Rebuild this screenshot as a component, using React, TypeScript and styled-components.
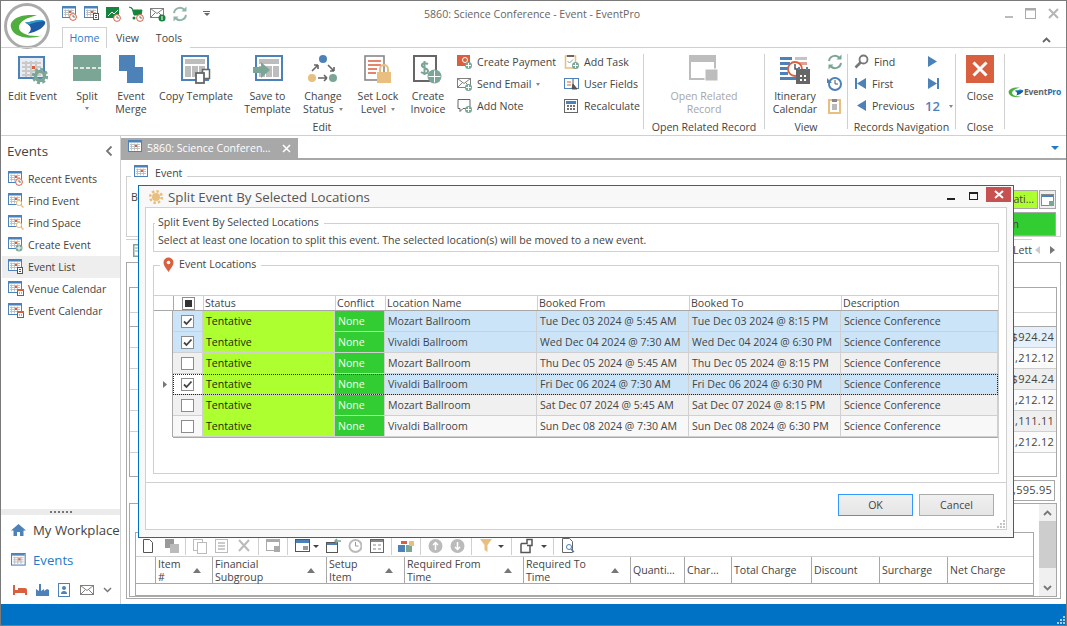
import React from 'react';
import styled, { createGlobalStyle } from 'styled-components';

const BLUE = '#4d82b8';
const TEAL = '#7ba696';
const RED = '#d9603f';
const SAND = '#e8bf7f';
const GREY = '#7f7f7f';
const LINE = '#d0d0d0';
const DARK = '#a8a8a8';

const GlobalStyle = createGlobalStyle`
  html, body { margin: 0; padding: 0; background: #fff; }
  body { font-family: "Open Sans", "Noto Sans", sans-serif; font-size: 10.6px; color: #444; }
  * { box-sizing: border-box; }
  svg { display: block; flex: none; }
`;

const Window = styled.div`
  position: relative;
  width: 1067px;
  height: 626px;
  border: 1px solid #7a7a7a;
  display: flex;
  flex-direction: column;
  overflow: hidden;
`;

/* title bar + ribbon tabs */
const Header = styled.div`
  height: 46px;
  display: flex;
  flex: none;
`;
const LogoBox = styled.div`
  width: 61px;
  padding: 1px 0 0 2px;
`;
const HeaderMain = styled.div`
  flex: 1;
  display: flex;
  flex-direction: column;
`;
const TitleRow = styled.div`
  height: 26px;
  display: flex;
  align-items: center;
  padding-bottom: 1px;
`;
const Qat = styled.div`
  display: flex;
  gap: 6px;
  width: 362px;
  align-items: center;
`;
const QatArrow = styled.span`
  margin-left: 9px;
  width: 7px;
  border-top: 1px solid #666;
  padding-top: 1px;
  &::after {
    content: '';
    display: block;
    border: 3px solid transparent;
    border-top: 3px solid #666;
    border-bottom: 0;
    margin-left: 0.5px;
  }
`;
const WinTitle = styled.div`
  color: #666;
  white-space: nowrap;
`;
const WinButtons = styled.div`
  margin-left: auto;
  display: flex;
  gap: 11px;
  padding-right: 7px;
  align-items: center;
`;
const TabRow = styled.div`
  display: flex;
  align-items: flex-end;
  height: 20px;
  padding-right: 15px;
`;
const RibbonTab = styled.div<{ $active?: boolean; $w: number }>`
  width: ${p => p.$w}px;
  height: 21px;
  margin-bottom: -1px;
  padding-bottom: 1px;
  display: flex;
  align-items: center;
  justify-content: center;
  position: relative;
  background: #fff;
  color: ${p => (p.$active ? '#2b7cc8' : '#444')};
  border: 1px solid ${p => (p.$active ? LINE : 'transparent')};
  border-bottom: 0;
`;
const Collapse = styled.div`
  margin-left: auto;
  margin-bottom: 4px;
`;

/* ribbon */
const Ribbon = styled.div`
  height: 89px;
  flex: none;
  display: flex;
  border-top: 1px solid ${LINE};
  border-bottom: 1px solid ${LINE};
`;
const Group = styled.div<{ $w: number }>`
  width: ${p => p.$w}px;
  flex: none;
  position: relative;
  display: flex;
  flex-direction: column;
  &::after {
    content: '';
    position: absolute;
    right: 0;
    top: 6px;
    bottom: 6px;
    width: 1px;
    background: ${LINE};
  }
`;
const GroupBody = styled.div<{ $pl?: number }>`
  height: 72px;
  display: flex;
  padding-top: 7px;
  padding-left: ${p => p.$pl ?? 0}px;
`;
const GroupLabel = styled.div`
  text-align: center;
  line-height: 14px;
  padding-right: 1px;
  white-space: nowrap;
`;
const LargeButton = styled.div<{ $w: number; $off?: boolean }>`
  width: ${p => p.$w}px;
  flex: none;
  display: flex;
  flex-direction: column;
  align-items: center;
  text-align: center;
  line-height: 13px;
  color: ${p => (p.$off ? '#a6a6a6' : '#444')};
  white-space: nowrap;
`;
const LargeIcon = styled.div`
  height: 35px;
`;
const SmallColumn = styled.div<{ $w?: number; $ml?: number }>`
  width: ${p => (p.$w ? `${p.$w}px` : 'auto')};
  margin-left: ${p => p.$ml ?? 0}px;
  margin-top: -4px;
  display: flex;
  flex-direction: column;
`;
const SmallButton = styled.div`
  height: 22px;
  display: flex;
  align-items: center;
  gap: 4px;
  white-space: nowrap;
`;
const Drop = styled.span`
  display: inline-block;
  margin-left: 5px;
  vertical-align: 2px;
  border: 2.5px solid transparent;
  border-top: 3px solid #888;
  border-bottom: 0;
`;
const DropLine = styled.div`
  height: 11px;
  display: flex;
  justify-content: center;
  align-items: center;
  & > span { margin: 0; }
`;
const PageNumber = styled.span`
  color: ${BLUE};
  font-size: 13px;
  font-weight: 600;
`;
const BrandBox = styled.div`
  display: flex;
  align-items: center;
  gap: 0;
  padding: 0 0 0 2px;
  font-size: 8.6px;
  font-weight: 700;
  color: #666;
  letter-spacing: -0.2px;
`;
const BrandPro = styled.span`
  color: #1f6fb5;
`;

/* body */
const Body = styled.div`
  flex: 1;
  display: flex;
  min-height: 0;
`;
const Sidebar = styled.div`
  width: 120px;
  flex: none;
  border-right: 1px solid ${LINE};
  display: flex;
  flex-direction: column;
  overflow: hidden;
`;
const SideHead = styled.div`
  height: 31px;
  padding: 0 7px 2px 6px;
  margin-bottom: 1px;
  display: flex;
  align-items: center;
  justify-content: space-between;
  font-size: 13.4px;
`;
const SideItem = styled.div<{ $on?: boolean }>`
  height: 22px;
  display: flex;
  align-items: center;
  gap: 4px;
  padding: 0 0 1px 6px;
  margin-left: 1px;
  background: ${p => (p.$on ? '#eeeeee' : 'transparent')};
  white-space: nowrap;
`;
const Splitter = styled.div`
  margin-top: auto;
  height: 6px;
  background: #ebebeb;
  display: flex;
  justify-content: center;
  align-items: center;
  gap: 2px;
  & > i { width: 2px; height: 2px; background: #777; }
`;
const NavLink = styled.div<{ $on?: boolean }>`
  height: 30px;
  display: flex;
  align-items: center;
  gap: 7px;
  padding: 0 0 1px 10px;
  font-size: 13.2px;
  white-space: nowrap;
  color: ${p => (p.$on ? '#1f7ac8' : '#444')};
`;
const NavIcons = styled.div`
  height: 29px;
  display: flex;
  align-items: center;
  gap: 9px;
  padding-left: 12px;
`;

const Main = styled.div`
  flex: 1;
  min-width: 0;
  display: flex;
  flex-direction: column;
`;
const DocStrip = styled.div`
  height: 24px;
  flex: none;
  border-bottom: 2px solid ${DARK};
  display: flex;
  align-items: flex-end;
  justify-content: space-between;
  padding-right: 7px;
`;
const DocTab = styled.div`
  width: 177px;
  height: 22px;
  background: ${DARK};
  margin-bottom: -2px;
  color: #fff;
  display: flex;
  align-items: center;
  gap: 3px;
  padding: 0 7px 2px 7px;
  white-space: nowrap;
`;
const DocTabName = styled.span`
  flex: 1;
`;
const StripArrow = styled.div`
  border: 4px solid transparent;
  border-top: 4px solid #1f7ac8;
  border-bottom: 0;
  margin-bottom: 8px;
`;
const Content = styled.div`
  flex: 1;
  min-height: 0;
  display: flex;
  flex-direction: column;
  padding: 16px 5px 5px 5px;
`;
const EventGroup = styled.div`
  position: relative;
  height: 61px;
  flex: none;
  border: 1px solid ${LINE};
  padding: 13px 4px 0 4px;
  display: flex;
  justify-content: space-between;
`;
const Legend = styled.div<{ $x: number; $y: number }>`
  position: absolute;
  left: ${p => p.$x}px;
  top: ${p => p.$y}px;
  height: 14px;
  padding: 0 5px 0 3px;
  background: #fff;
  display: flex;
  align-items: center;
  gap: 5px;
  white-space: nowrap;
`;
const FieldStack = styled.div`
  width: 320px;
  display: flex;
  flex-direction: column;
  gap: 3px;
`;
const FieldRow = styled.div`
  display: flex;
  gap: 1px;
`;
const Field = styled.div<{ $bg: string; $h: number; $pr: number }>`
  flex: 1;
  height: ${p => p.$h}px;
  background: ${p => p.$bg};
  border: 1px solid ${DARK};
  padding: 0 ${p => p.$pr}px 1px 0;
  display: flex;
  align-items: center;
  justify-content: flex-end;
  overflow: hidden;
  white-space: nowrap;
`;
const FieldButton = styled.div`
  width: 17px;
  height: 19px;
  background: #eee;
  border: 1px solid ${DARK};
  display: flex;
  align-items: center;
  justify-content: center;
`;
const TabsPanel = styled.div`
  flex: 1;
  min-height: 0;
  margin-top: 2px;
  display: flex;
  flex-direction: column;
`;
const TabsHead = styled.div`
  height: 23px;
  flex: none;
  display: flex;
`;
const TabsStrip = styled.div`
  flex: 1;
  border-top: 1px solid ${LINE};
  display: flex;
  align-items: center;
  justify-content: space-between;
  padding: 0 0 2px 7px;
`;
const TabsArrows = styled.div`
  width: 29px;
  padding: 0 6px 0 3px;
  display: flex;
  align-items: center;
  justify-content: space-between;
  padding-bottom: 2px;
`;
const TabsBody = styled.div`
  flex: 1;
  min-height: 0;
  border: 1px solid ${DARK};
  padding: 0 3px 1px 2px;
  display: flex;
  flex-direction: column;
`;
const TopSection = styled.div`
  height: 240px;
  flex: none;
  padding-top: 24px;
  display: flex;
  flex-direction: column;
  align-items: flex-end;
`;
const ChargeTable = styled.div`
  width: 100%;
  height: 190px;
  border: 1px solid ${DARK};
  display: flex;
  flex-direction: column;
`;
const ChargeRow = styled.div<{ $h: number; $strong?: boolean }>`
  height: ${p => p.$h}px;
  flex: none;
  border-bottom: 1px solid ${p => (p.$strong ? DARK : LINE)};
  display: flex;
  justify-content: flex-end;
`;
const ChargeCell = styled.div<{ $bg: string }>`
  width: 140px;
  background: ${p => p.$bg};
  display: flex;
  align-items: center;
  justify-content: flex-end;
  padding: 0 2px 1px 0;
  font-size: 11px;
  letter-spacing: 0.25px;
  white-space: nowrap;
`;
const TotalBox = styled.div`
  margin: 3px 2px 0 0;
  width: 200px;
  height: 21px;
  border: 1px solid ${DARK};
  text-align: right;
  padding-right: 2px;
  line-height: 18px;
  font-size: 11px;
  letter-spacing: 0.25px;
`;
const BottomSection = styled.div`
  flex: 1;
  min-height: 0;
  border: 1px solid ${DARK};
  display: flex;
  gap: 5px;
  padding-left: 5px;
`;
const SubPanel = styled.div`
  flex: 1;
  margin-top: 28px;
  border: 1px solid ${DARK};
  display: flex;
  flex-direction: column;
  min-width: 0;
`;
const Toolbar = styled.div`
  height: 23px;
  flex: none;
  display: flex;
  align-items: center;
  padding: 3px 0 0 7px;
`;
const ToolSlot = styled.span<{ $ml: number }>`
  margin-left: ${p => p.$ml}px;
`;
const ToolSep = styled.span<{ $ml: number }>`
  margin-left: ${p => p.$ml}px;
  width: 1px;
  height: 18px;
  background: ${LINE};
`;
const ToolDrop = styled.span<{ $ml: number }>`
  margin-left: ${p => p.$ml}px;
  border: 3px solid transparent;
  border-top: 3px solid #444;
  border-bottom: 0;
`;
const SubHead = styled.div`
  height: 28px;
  display: flex;
  border-top: 1px solid ${LINE};
  border-bottom: 1px solid ${DARK};
  line-height: 13px;
`;
const SubCell = styled.div<{ $w: number }>`
  width: ${p => p.$w}px;
  flex: none;
  border-right: 1px solid ${DARK};
  padding: 1px 2px 0 2px;
  display: flex;
  align-items: center;
  justify-content: space-between;
  white-space: pre-line;
  &:last-child { border-right: 0; flex: 1; }
`;
const SortMark = styled.span`
  flex: none;
  margin-right: 9px;
  border: 4.5px solid transparent;
  border-bottom: 5px solid #777;
  border-top: 0;
`;
const ScrollBar = styled.div`
  width: 17px;
  flex: none;
  background: #f0f0f0;
  display: flex;
  flex-direction: column;
  align-items: center;
`;
const ScrollArrow = styled.div`
  height: 17px;
  display: flex;
  align-items: center;
  justify-content: center;
`;
const ScrollThumb = styled.div`
  width: 100%;
  height: 47px;
  background: #cdcdcd;
  margin-bottom: auto;
`;

const StatusBar = styled.div`
  height: 21px;
  flex: none;
  background: #0072c6;
  position: relative;
`;
const Grip = styled.div<{ $c: string }>`
  position: absolute;
  right: 1px;
  bottom: 1px;
  width: 8px;
  height: 8px;
  background:
    linear-gradient(${p => p.$c}, ${p => p.$c}) 6px 0 / 2px 2px no-repeat,
    linear-gradient(${p => p.$c}, ${p => p.$c}) 3px 3px / 2px 2px no-repeat,
    linear-gradient(${p => p.$c}, ${p => p.$c}) 6px 3px / 2px 2px no-repeat,
    linear-gradient(${p => p.$c}, ${p => p.$c}) 0 6px / 2px 2px no-repeat,
    linear-gradient(${p => p.$c}, ${p => p.$c}) 3px 6px / 2px 2px no-repeat,
    linear-gradient(${p => p.$c}, ${p => p.$c}) 6px 6px / 2px 2px no-repeat;
`;

/* split dialog */
const Dialog = styled.div`
  position: absolute;
  left: 137px;
  top: 184px;
  width: 876px;
  height: 353px;
  border: 1px solid #0072c6;
  background: #f8f8f8;
  display: flex;
  flex-direction: column;
  padding: 0 6px 7px 6px;
`;
const DialogTitle = styled.div`
  height: 21px;
  flex: none;
  display: flex;
  align-items: center;
  gap: 4px;
  margin-left: 3px;
  font-size: 13.3px;
  color: #555;
  white-space: nowrap;
`;
const DialogButtons = styled.div`
  margin-left: auto;
  margin-right: -4px;
  display: flex;
  align-items: center;
  gap: 13px;
`;
const CloseBox = styled.div`
  width: 25px;
  height: 15px;
  flex: none;
  margin-left: -6px;
  margin-top: -4px;
  background: #c75050;
  display: flex;
  align-items: center;
  justify-content: center;
`;
const DialogBody = styled.div`
  flex: 1;
  position: relative;
  background: #fff;
  border: 1px solid ${LINE};
  padding: 15px 7px 0 7px;
  display: flex;
  flex-direction: column;
`;
const InfoGroup = styled.div`
  position: relative;
  height: 29px;
  flex: none;
  border: 1px solid ${LINE};
  padding: 8px 0 0 4px;
  line-height: 16px;
  white-space: nowrap;
`;
const LocationsGroup = styled.div`
  position: relative;
  height: 209px;
  flex: none;
  margin-top: 13px;
  border: 1px solid ${LINE};
  padding-top: 29px;
`;
const columns = '19px 30px 132px 50px 152px 152px 152px 1fr';
const GridHead = styled.div`
  display: grid;
  grid-template-columns: ${columns};
  height: 16px;
  border-top: 1px solid ${LINE};
  border-bottom: 1px solid ${DARK};
`;
const HeadCell = styled.div`
  border-left: 1px solid ${LINE};
  padding-left: 1px;
  line-height: 14px;
  white-space: nowrap;
  display: flex;
  align-items: center;
  &:nth-child(-n + 2) { border-left-color: ${DARK}; }
  &:first-child { border-left: 0; }
`;
const HeadCheck = styled(HeadCell)`
  justify-content: center;
  padding-left: 0;
`;
const Row = styled.div<{ $focus?: boolean }>`
  display: grid;
  grid-template-columns: ${columns};
  height: 21px;
  position: relative;
  &::after {
    content: '';
    display: ${p => (p.$focus ? 'block' : 'none')};
    position: absolute;
    inset: 0 0 0 19px;
    border: 1px dotted #222;
    pointer-events: none;
  }
`;
const Indicator = styled.div`
  display: flex;
  align-items: center;
  justify-content: flex-end;
  padding-right: 5px;
  border-right: 1px solid ${DARK};
`;
const Cell = styled.div<{ $bg: string; $fg?: string }>`
  background: ${p => p.$bg};
  color: ${p => p.$fg ?? '#444'};
  border-right: 1px solid ${LINE};
  border-bottom: 1px solid ${LINE};
  padding: 0 0 1px 3px;
  display: flex;
  align-items: center;
  white-space: nowrap;
  overflow: hidden;
`;
const CheckCell = styled(Cell)`
  justify-content: center;
  padding: 0;
`;
const CheckBox = styled.div`
  width: 13px;
  height: 13px;
  background: #fff;
  border: 1px solid #8c8c8c;
  display: flex;
  align-items: center;
  justify-content: center;
`;
const GridEnd = styled.div`
  margin-left: 19px;
  border-top: 1px solid ${DARK};
`;
const DialogFooter = styled.div`
  margin: 8px -7px 0 -7px;
  border-top: 1px solid ${LINE};
  padding: 11px 12px 0 0;
  display: flex;
  justify-content: flex-end;
  gap: 6px;
`;
const DialogButton = styled.div<{ $primary?: boolean }>`
  width: 75px;
  height: 22px;
  padding-bottom: 1px;
  background: linear-gradient(#f0f0f0, #e5e5e5);
  border: 1px solid ${p => (p.$primary ? '#3399ff' : '#acacac')};
  display: flex;
  align-items: center;
  justify-content: center;
`;

/* drawings */
const Ico = ({ w = 16, h = 16, children }: { w?: number; h?: number; children: React.ReactNode }) => (
  <svg width={w} height={h} viewBox={`0 0 ${w} ${h}`}>{children}</svg>
);
const CalBase = ({ c = BLUE }: { c?: string }) => (
  <g>
    <rect x=".5" y=".5" width="13" height="11" fill="#fff" stroke={c} />
    <rect x="1" y="1" width="12" height="1.5" fill={c} />
    <path d="M2 4.500h10M2 6.500h10M2 8.500h10M3.500 3.500v7M6.500 3.500v7M9.500 3.500v7" stroke="#bbb" strokeWidth=".9" />
    <rect x="7" y="5" width="2" height="2" fill={RED} />
  </g>
);
const Clock = ({ x, y, c = RED }: { x: number; y: number; c?: string }) => (
  <g>
    <circle cx={x} cy={y} r="3.400" fill="#fff" stroke={c} />
    <path d={`M${x} ${y - 2}v2h2`} stroke="#555" fill="none" strokeWidth=".8" />
  </g>
);
const Plus = ({ x, y, r = 3.5 }: { x: number; y: number; r?: number }) => (
  <g>
    <circle cx={x} cy={y} r={r} fill={TEAL} />
    <path d={`M${x - r + 1} ${y}h${2 * r - 2}M${x} ${y - r + 1}v${2 * r - 2}`} stroke="#fff" />
  </g>
);
const Lens = ({ x, y }: { x: number; y: number }) => (
  <g fill="none" stroke={SAND}>
    <circle cx={x} cy={y} r="2.600" fill="#fff" />
    <path d={`M${x + 2} ${y + 2}l2.500 2.500`} strokeWidth="1.500" />
  </g>
);
const MiniDoc = ({ x, y }: { x: number; y: number }) => (
  <g>
    <rect x={x + 0.5} y={y + 0.5} width="5" height="6" fill="#fff" stroke="#555" />
    <path d={`M${x + 2} ${y + 2.5}h2M${x + 2} ${y + 4.5}h2`} stroke="#555" />
  </g>
);
const MiniCal = ({ x, y }: { x: number; y: number }) => (
  <g>
    <rect x={x + 0.5} y={y + 0.5} width="6" height="6" fill="#fff" stroke="#666" />
    <rect x={x} y={y} width="7" height="2" fill={RED} />
    <path d={`M${x + 2} ${y + 4}h1M${x + 4} ${y + 4}h1`} stroke="#666" />
  </g>
);
const Envelope = ({ c = GREY }: { c?: string }) => (
  <g fill="#fff" stroke={c}>
    <rect x=".5" y="2.500" width="13" height="9" />
    <path d="M.5 2.500l6.500 5 6.500-5M.5 11.500l5-5M13.500 11.500l-5-5" fill="none" />
  </g>
);
const Refresh = ({ c = TEAL }: { c?: string }) => (
  <g fill="none" stroke={c} strokeWidth="2">
    <path d="M2 7a6 6 0 0 1 10.500-3" />
    <path d="M14 9a6 6 0 0 1-10.500 3" />
    <path d="M14.500 .5v5h-5z" fill={c} stroke="none" />
    <path d="M1.500 15.500v-5h5z" fill={c} stroke="none" />
  </g>
);
const Swoosh = () => (
  <g>
    <path d="M36 13C22 11 8 16 10 25c2 9 16 13 31 8-12 2-23-2-23-8 0-6 8-10 18-12z" fill="#4fae3d" />
    <path d="M24 20c6 0 14-5 20-1 2 4-8 11-17 12 5-4 3-8-3-11z" fill="#1f5aa6" />
    <path d="M24 20c6 0 14-5 20-1-6-1-12 2-16 3z" fill="#29a0c8" />
  </g>
);
const Logo = () => (
  <svg width="48" height="48" viewBox="0 0 48 48">
    <circle cx="24" cy="24" r="21.500" fill="#fff" stroke="#ababab" strokeWidth="3" />
    <g transform="translate(-2 .5)"><Swoosh /></g>
  </svg>
);

const QatIcons = [
  <Ico key="a"><CalBase /><Clock x={11} y={11} /></Ico>,
  <Ico key="b"><CalBase /><MiniDoc x={9} y={7} /></Ico>,
  <Ico key="c">
    <rect x="0" y="1" width="13" height="11" fill="#16843c" />
    <path d="M2 10l4-4 2 2 4-4" stroke="#fff" fill="none" />
    <Clock x={11} y={12} />
  </Ico>,
  <Ico key="d">
    <path d="M1 1l3 1 2 7h7l1-5H5" fill="#16843c" stroke="#16843c" />
    <circle cx="6" cy="12" r="1.500" fill="#16843c" />
    <Clock x={12} y={12} />
  </Ico>,
  <Ico key="e"><Envelope /><circle cx="12" cy="12" r="3.500" fill="#16843c" /><rect x="11.500" y="10" width="1" height="4" fill="#fff" /></Ico>,
  <Ico key="f"><Refresh c="#8fb5a7" /></Ico>,
];

const EditEventIcon = () => (
  <Ico w={30} h={30}>
    <rect x="1" y="2" width="25" height="21" fill="#e8edf3" stroke={BLUE} strokeWidth="2" />
    <path d="M4 8h19M4 12h19M4 16h19M4 20h19M8 6v16M13 6v16M18 6v16" stroke="#c9c9c9" strokeWidth="2" />
    <rect x="14" y="11" width="3" height="3" fill={RED} />
    <circle cx="22" cy="21" r="4.500" fill="none" stroke={TEAL} strokeWidth="3.500" />
    <circle cx="22" cy="21" r="7" fill="none" stroke={TEAL} strokeWidth="2.500" strokeDasharray="3 2.500" />
  </Ico>
);
const SplitIcon = () => (
  <Ico w={28} h={28}>
    <rect x="0" y="0" width="28" height="26" fill={TEAL} />
    <path d="M1 13h27" stroke="#fff" strokeWidth="1.500" strokeDasharray="4 2" />
  </Ico>
);
const MergeIcon = () => (
  <Ico w={25} h={29}>
    <rect x="0" y="0" width="16" height="16" fill={BLUE} />
    <rect x="8" y="12" width="16" height="16" fill={BLUE} />
  </Ico>
);
const TemplateFrame = ({ children }: { children?: React.ReactNode }) => (
  <g>
    <rect x="1" y="1" width="26" height="24" fill="#fff" stroke={BLUE} strokeWidth="2" />
    <rect x="4" y="4" width="20" height="5" fill="#bdbdbd" />
    <rect x="4" y="11" width="6" height="11" fill="#bdbdbd" />
    <rect x="11" y="11" width="6" height="11" fill="#bdbdbd" />
    <rect x="18" y="11" width="6" height="11" fill="#bdbdbd" />
    {children}
  </g>
);
const CopyTemplateIcon = () => (
  <Ico w={30} h={30}>
    <TemplateFrame>
      <rect x="21.500" y="14.500" width="7" height="9" fill="#fff" stroke="#666" strokeWidth="1.500" />
      <rect x="15" y="18" width="8" height="10" fill="#fff" stroke="#666" strokeWidth="1.800" />
    </TemplateFrame>
  </Ico>
);
const SaveTemplateIcon = () => (
  <Ico w={30} h={30}>
    <g transform="translate(2 0)"><TemplateFrame /></g>
    <path d="M0 13h8V8l9 8-9 8v-5H0z" fill={TEAL} transform="translate(0 -1)" />
  </Ico>
);
const ChangeStatusIcon = () => (
  <Ico w={30} h={30}>
    <circle cx="15" cy="4" r="4" fill={BLUE} />
    <circle cx="4" cy="23" r="4" fill={SAND} />
    <circle cx="25" cy="23" r="4" fill={TEAL} />
    <path d="M4 16l6-6M10 10H6M10 10v4M20 10l6 6M26 16h-4M26 16v-4M10 23h9M19 23l-3-3M19 23l-3 3" stroke="#666" strokeWidth="1.600" fill="none" />
  </Ico>
);
const LockIcon = () => (
  <Ico w={28} h={30}>
    <rect x="1" y="1" width="19" height="24" fill="#fff" stroke="#888" strokeWidth="1.600" />
    <path d="M4 6h13M4 10h13M4 14h9M4 18h8" stroke={RED} strokeWidth="1.500" />
    <rect x="13" y="17" width="14" height="11" fill={SAND} />
    <path d="M16 17v-3a4 4 0 0 1 8 0v3" fill="none" stroke={SAND} strokeWidth="2" />
  </Ico>
);
const InvoiceIcon = () => (
  <Ico w={30} h={30}>
    <rect x="1" y="1" width="22" height="25" fill="#fff" stroke="#666" strokeWidth="2" />
    <path d="M15 9c-4-2-7 0-6 2s6 2 6 5-4 3-7 1M11.500 6v14" stroke={TEAL} strokeWidth="2" fill="none" />
    <Plus x={21.500} y={21.500} r={7} />
  </Ico>
);
const OpenRelatedIcon = () => (
  <Ico w={30} h={30}>
    <rect x="1" y="1" width="25" height="23" fill="#fff" stroke="#bdbdbd" strokeWidth="2" />
    <rect x="1" y="1" width="25" height="6" fill="#bdbdbd" />
    <rect x="16" y="14" width="13" height="12" fill="#bdbdbd" stroke="#fff" />
  </Ico>
);
const ItineraryIcon = () => (
  <Ico w={32} h={30}>
    <path d="M1 2h12v3H1zM1 7h10v3H1zM1 12h8v3H1zM1 17h8v3H1zM1 22h18v3H1z" fill={BLUE} />
    <path d="M16 2h12v3H16z" fill="#c4c4c4" />
    <path d="M20 7h8v3h-8z" fill="#e0a090" />
    <circle cx="16" cy="14" r="7" fill="#fff" stroke={RED} strokeWidth="1.800" />
    <path d="M16 9v5h4" stroke="#555" fill="none" strokeWidth="1.500" />
    <rect x="17" y="14" width="14" height="15" fill="#666" />
    <rect x="19" y="12" width="2" height="3" fill={BLUE} />
    <rect x="27" y="12" width="2" height="3" fill={BLUE} />
    <path d="M21 20h2v2h-2zM25 20h2v2h-2zM21 24h2v2h-2zM25 24h2v2h-2z" fill="#fff" />
  </Ico>
);
const CloseIcon = () => (
  <Ico w={28} h={28}>
    <rect width="28" height="28" fill={RED} />
    <path d="M7.500 7.500l13 13M20.500 7.500l-13 13" stroke="#fff" strokeWidth="3" />
  </Ico>
);
const Tri = ({ dir, bar, c = BLUE }: { dir: 'l' | 'r'; bar?: boolean; c?: string }) => (
  <Ico w={14} h={14}>
    {dir === 'l' ? <path d="M12 1v11L3 6.500z" fill={c} /> : <path d="M3 1v11l9-5.500z" fill={c} />}
    {bar && <rect x={dir === 'l' ? 1 : 12} y="1" width="2" height="11" fill={c} />}
  </Ico>
);
const Chevron = ({ up, c = '#777' }: { up?: boolean; c?: string }) => (
  <Ico w={9} h={6}>
    <path d={up ? 'M1 5l3.500-3.500L8 5' : 'M1 1l3.500 3.500L8 1'} fill="none" stroke={c} strokeWidth="1.800" />
  </Ico>
);

const sideIcons: Record<string, React.ReactNode> = {
  recent: <Clock x={11} y={11} />,
  find: <Lens x={11} y={10} />,
  create: <Plus x={11} y={11} />,
  list: <MiniDoc x={9} y={8} />,
  cal: <MiniCal x={9} y={8} />,
};
const sideItems = [
  ['Recent Events', 'recent'],
  ['Find Event', 'find'],
  ['Find Space', 'find'],
  ['Create Event', 'create'],
  ['Event List', 'list'],
  ['Venue Calendar', 'cal'],
  ['Event Calendar', 'cal'],
];

const locations = [
  { on: true, name: 'Mozart Ballroom', from: 'Tue Dec 03 2024 @ 5:45 AM', to: 'Tue Dec 03 2024 @ 8:15 PM' },
  { on: true, name: 'Vivaldi Ballroom', from: 'Wed Dec 04 2024 @ 7:30 AM', to: 'Wed Dec 04 2024 @ 6:30 PM' },
  { on: false, name: 'Mozart Ballroom', from: 'Thu Dec 05 2024 @ 5:45 AM', to: 'Thu Dec 05 2024 @ 8:15 PM' },
  { on: true, focus: true, name: 'Vivaldi Ballroom', from: 'Fri Dec 06 2024 @ 7:30 AM', to: 'Fri Dec 06 2024 @ 6:30 PM' },
  { on: false, name: 'Mozart Ballroom', from: 'Sat Dec 07 2024 @ 5:45 AM', to: 'Sat Dec 07 2024 @ 8:15 PM' },
  { on: false, plain: true, name: 'Vivaldi Ballroom', from: 'Sun Dec 08 2024 @ 7:30 AM', to: 'Sun Dec 08 2024 @ 6:30 PM' },
];

const subColumns: [string, number, boolean][] = [
  ['', 20, false],
  ['Item\n#', 57, true],
  ['Financial\nSubgroup', 114, true],
  ['Setup\nItem', 78, true],
  ['Required From\nTime', 119, true],
  ['Required To\nTime', 107, true],
  ['Quanti…', 54, false],
  ['Char…', 47, false],
  ['Total Charge', 80, false],
  ['Discount', 68, false],
  ['Surcharge', 68, false],
  ['Net Charge', 86, false],
];

const charges: [string, string][] = [
  ['$924.24', '#e6f0fa'],
  ['$1,212.12', '#fbfbfb'],
  ['$924.24', '#efefef'],
  ['$1,212.12', '#fbfbfb'],
  ['$1,111.11', '#efefef'],
  ['$1,212.12', '#fbfbfb'],
];

const Tool = ({ children, w = 16, ml }: { children: React.ReactNode; w?: number; ml: number }) => (
  <ToolSlot $ml={ml}><Ico w={w} h={16}>{children}</Ico></ToolSlot>
);

export default function App() {
  return (
    <>
      <GlobalStyle />
      <Window>
        <Header>
          <LogoBox><Logo /></LogoBox>
          <HeaderMain>
            <TitleRow>
              <Qat>
                {QatIcons}
                <QatArrow />
              </Qat>
              <WinTitle>5860: Science Conference - Event - EventPro</WinTitle>
              <WinButtons>
                <Ico w={9} h={12}><rect x="0" y="8" width="8" height="2" fill="#bbb" /></Ico>
                <Ico w={12} h={12}><rect x=".5" y=".5" width="10" height="10" fill="none" stroke="#aaa" /><rect x="0" y="0" width="11" height="2.500" fill="#aaa" /></Ico>
                <Ico w={11} h={11}><path d="M1 1l9 9M10 1l-9 9" stroke="#b5b5b5" strokeWidth="2" /></Ico>
              </WinButtons>
            </TitleRow>
            <TabRow>
              <RibbonTab $active $w={45}>Home</RibbonTab>
              <RibbonTab $w={41}>View</RibbonTab>
              <RibbonTab $w={42}>Tools</RibbonTab>
              <Collapse><Chevron up c="#666" /></Collapse>
            </TabRow>
          </HeaderMain>
        </Header>

        <Ribbon>
          <Group $w={643}>
            <GroupBody $pl={2}>
              <LargeButton $w={59}><LargeIcon><EditEventIcon /></LargeIcon>Edit Event</LargeButton>
              <LargeButton $w={50}><LargeIcon><SplitIcon /></LargeIcon>Split<DropLine><Drop /></DropLine></LargeButton>
              <LargeButton $w={38}><LargeIcon><MergeIcon /></LargeIcon>Event<br />Merge</LargeButton>
              <LargeButton $w={92}><LargeIcon><CopyTemplateIcon /></LargeIcon>Copy Template</LargeButton>
              <LargeButton $w={51}><LargeIcon><SaveTemplateIcon /></LargeIcon>Save to<br />Template</LargeButton>
              <LargeButton $w={60}><LargeIcon><ChangeStatusIcon /></LargeIcon>Change<br /><span>Status<Drop /></span></LargeButton>
              <LargeButton $w={50}><LargeIcon><LockIcon /></LargeIcon>Set Lock<br /><span>Level<Drop /></span></LargeButton>
              <LargeButton $w={50}><LargeIcon><InvoiceIcon /></LargeIcon>Create<br />Invoice</LargeButton>
              <SmallColumn $w={107} $ml={4}>
                <SmallButton>
                  <Ico><rect x="0" y="1" width="13" height="11" fill={RED} /><circle cx="8" cy="6" r="2.500" fill="none" stroke="#fff" /><Plus x={11.500} y={11.500} /></Ico>
                  Create Payment
                </SmallButton>
                <SmallButton>
                  <Ico><Envelope /><Plus x={11.500} y={11.500} /></Ico>
                  <span>Send Email<Drop /></span>
                </SmallButton>
                <SmallButton>
                  <Ico><path d="M1 1.500h12v9H6l-3 3v-3H1z" fill="#fff" stroke="#666" /><Plus x={11.500} y={11.500} /></Ico>
                  Add Note
                </SmallButton>
              </SmallColumn>
              <SmallColumn>
                <SmallButton>
                  <Ico><rect x="1.500" y="2" width="10" height="12" fill="#fff" stroke={SAND} strokeWidth="1.500" /><path d="M3 1h7v2H3z" fill="#666" /><path d="M3.500 7l2 2 3.500-3.500" stroke={TEAL} fill="none" /><Plus x={11.500} y={11.500} /></Ico>
                  Add Task
                </SmallButton>
                <SmallButton>
                  <Ico><rect x=".5" y="2.500" width="14" height="10" fill="#fff" stroke={BLUE} /><path d="M3 6h4M3 9h4" stroke={RED} /><path d="M9 3v9M9 8l4 5H8z" fill="#555" stroke="#555" /></Ico>
                  User Fields
                </SmallButton>
                <SmallButton>
                  <Ico><rect x=".5" y="1.500" width="13" height="13" fill="#fff" stroke="#666" /><rect x="2" y="3" width="10" height="3" fill={BLUE} /><path d="M3 8h2M6 8h2M9 8h2M3 11h2M6 11h2M9 11h2" stroke="#444" strokeWidth="1.500" /></Ico>
                  Recalculate
                </SmallButton>
              </SmallColumn>
            </GroupBody>
            <GroupLabel>Edit</GroupLabel>
          </Group>

          <Group $w={121}>
            <GroupBody>
              <LargeButton $w={120} $off><LargeIcon><OpenRelatedIcon /></LargeIcon>Open Related<br />Record</LargeButton>
            </GroupBody>
            <GroupLabel>Open Related Record</GroupLabel>
          </Group>

          <Group $w={83}>
            <GroupBody>
              <LargeButton $w={60}><LargeIcon><ItineraryIcon /></LargeIcon>Itinerary<br />Calendar</LargeButton>
              <SmallColumn $ml={2}>
                <SmallButton><Ico><Refresh /></Ico></SmallButton>
                <SmallButton>
                  <Ico><circle cx="8" cy="8" r="6" fill="none" stroke={BLUE} strokeWidth="2" /><path d="M8 4v4h3" stroke="#555" fill="none" /><path d="M0 2v5h5z" fill={BLUE} /></Ico>
                </SmallButton>
                <SmallButton>
                  <Ico><rect x="2" y="2" width="11" height="13" fill="#fff" stroke={SAND} strokeWidth="2" /><path d="M5 1h5v3H5z" fill="#888" /><path d="M5 7h5M5 9h5M5 11h5" stroke="#777" /></Ico>
                </SmallButton>
              </SmallColumn>
            </GroupBody>
            <GroupLabel>View</GroupLabel>
          </Group>

          <Group $w={108}>
            <GroupBody>
              <SmallColumn $w={71} $ml={6}>
                <SmallButton>
                  <Ico><circle cx="9.500" cy="5.500" r="4" fill="none" stroke="#777" strokeWidth="1.800" /><path d="M6.500 8.500l-5 5" stroke="#777" strokeWidth="2.600" /></Ico>
                  Find
                </SmallButton>
                <SmallButton><Tri dir="l" bar /><span>First</span></SmallButton>
                <SmallButton><Tri dir="l" /><span>Previous</span></SmallButton>
              </SmallColumn>
              <SmallColumn>
                <SmallButton><Tri dir="r" /></SmallButton>
                <SmallButton><Tri dir="r" bar /></SmallButton>
                <SmallButton><PageNumber>12</PageNumber><Drop /></SmallButton>
              </SmallColumn>
            </GroupBody>
            <GroupLabel>Records Navigation</GroupLabel>
          </Group>

          <Group $w={49}>
            <GroupBody>
              <LargeButton $w={48}><LargeIcon><CloseIcon /></LargeIcon>Close</LargeButton>
            </GroupBody>
            <GroupLabel>Close</GroupLabel>
          </Group>

          <BrandBox>
            <svg width="17" height="14" viewBox="6 8 40 30"><Swoosh /></svg>
            <span>Event<BrandPro>Pro</BrandPro></span>
          </BrandBox>
        </Ribbon>

        <Body>
          <Sidebar>
            <SideHead>
              <span>Events</span>
              <Ico w={8} h={12}><path d="M6.500 1.500L2 6l4.500 4.500" fill="none" stroke="#777" strokeWidth="1.800" /></Ico>
            </SideHead>
            {sideItems.map(([label, kind]) => (
              <SideItem key={label} $on={label === 'Event List'}>
                <Ico><CalBase />{sideIcons[kind]}</Ico>
                {label}
              </SideItem>
            ))}
            <Splitter><i /><i /><i /><i /><i /><i /></Splitter>
            <NavLink>
              <Ico w={15} h={14}><path d="M7.500 1L15 7.500h-2.500V13H9V9H6v4H2.500V7.500H0z" fill={BLUE} /></Ico>
              My Workplace
            </NavLink>
            <NavLink $on>
              <Ico w={15} h={14}><g transform="scale(1.050)"><CalBase /></g></Ico>
              Events
            </NavLink>
            <NavIcons>
              <Ico w={14} h={12}><path d="M0 1h2v5h3V4h7a2 2 0 0 1 2 2v5h-2V9H2v2H0z" fill={RED} /></Ico>
              <Ico w={13} h={13}><path d="M0 13V6l3 2V1h2v7l3-2v2l3-2 2 1v6z" fill={BLUE} /></Ico>
              <Ico w={13} h={14}><rect x=".5" y=".5" width="11" height="13" fill="#fff" stroke={BLUE} /><circle cx="6" cy="5" r="2" fill={BLUE} /><path d="M3 11a3 3 0 0 1 6 0z" fill={BLUE} /></Ico>
              <Ico w={14} h={14}><Envelope /></Ico>
              <Ico w={9} h={6}><path d="M1 1l3.500 3.500L8 1" fill="none" stroke="#777" strokeWidth="1.500" /></Ico>
            </NavIcons>
          </Sidebar>

          <Main>
            <DocStrip>
              <DocTab>
                <Ico><CalBase /></Ico>
                <DocTabName>5860: Science Conferen…</DocTabName>
                <Ico w={9} h={9}><path d="M1 1l7 7M8 1L1 8" stroke="#fff" strokeWidth="1.600" /></Ico>
              </DocTab>
              <StripArrow />
            </DocStrip>

            <Content>
              <EventGroup>
                <Legend $x={4} $y={-11}><Ico><CalBase /></Ico>Event</Legend>
                <span>B</span>
                <FieldStack>
                  <FieldRow>
                    <Field $bg="#adff2f" $h={19} $pr={3}>Tentati…</Field>
                    <FieldButton>
                      <Ico w={14} h={14}><rect x=".5" y="1.500" width="12" height="11" fill="#fff" stroke="#888" /><rect x="1" y="2" width="11" height="2" fill={BLUE} /><rect x="8" y="8" width="5" height="5" fill={TEAL} /></Ico>
                    </FieldButton>
                  </FieldRow>
                  <Field $bg="#32cd32" $h={20} $pr={36}>Confirmation</Field>
                </FieldStack>
              </EventGroup>

              <TabsPanel>
                <TabsHead>
                  <TabsStrip>
                    <Ico w={10} h={13}><rect x=".75" y=".75" width="8.500" height="11.500" fill="#fff" stroke={TEAL} strokeWidth="1.500" /><path d="M2 4h6M2 7h6" stroke={TEAL} /></Ico>
                    <span>Lett</span>
                  </TabsStrip>
                  <TabsArrows>
                    <Ico w={5} h={8}><path d="M5 0v8L0 4z" fill="#ccc" /></Ico>
                    <Ico w={5} h={8}><path d="M0 0v8l5-4z" fill="#777" /></Ico>
                  </TabsArrows>
                </TabsHead>
                <TabsBody>
                  <TopSection>
                    <ChargeTable>
                      <ChargeRow $h={25} />
                      <ChargeRow $h={14} $strong />
                      {charges.map(([amount, bg], i) => (
                        <ChargeRow key={i} $h={21}><ChargeCell $bg={bg}>{amount}</ChargeCell></ChargeRow>
                      ))}
                    </ChargeTable>
                    <TotalBox>$6,595.95</TotalBox>
                  </TopSection>
                  <BottomSection>
                    <SubPanel>
                      <Toolbar>
                        <Tool ml={0} w={11}><path d="M.5 1.500h6l3 3v10h-9z" fill="#fff" stroke="#555" /></Tool>
                        <Tool ml={11} w={14}><rect x="0" y="1" width="9" height="9" fill="#999" /><rect x="5" y="6" width="9" height="9" fill="#bbb" /></Tool>
                        <ToolSep $ml={6} />
                        <Tool ml={7} w={14}><rect x=".5" y="1.500" width="9" height="11" fill="#fff" stroke="#bbb" /><rect x="4.500" y="4.500" width="9" height="11" fill="#fff" stroke="#bbb" /></Tool>
                        <Tool ml={8} w={14}><rect x=".5" y="1.500" width="12" height="13" fill="#fff" stroke="#bbb" /><path d="M3 5h7M3 8h7M3 11h7" stroke="#bbb" strokeWidth="1.500" /></Tool>
                        <Tool ml={9} w={12}><path d="M1 2l10 11M11 2L1 13" stroke="#bbb" strokeWidth="2" /></Tool>
                        <ToolSep $ml={8} />
                        <Tool ml={7} w={14}><rect x=".5" y="1.500" width="13" height="11" fill="#fff" stroke="#aaa" /><rect x="1" y="2" width="12" height="2" fill="#aaa" /><rect x="8" y="8" width="6" height="6" fill="#aaa" /></Tool>
                        <ToolSep $ml={7} />
                        <Tool ml={7} w={15}><rect x=".5" y="1.500" width="14" height="12" fill="#fff" stroke="#555" /><rect x="1" y="2" width="13" height="3" fill={BLUE} /><rect x="8" y="8" width="5" height="4" fill="#999" /></Tool>
                        <ToolDrop $ml={3} />
                        <Tool ml={7} w={15}><rect x=".5" y="4.500" width="11" height="10" fill="#fff" stroke="#555" /><rect x="1" y="5" width="10" height="2" fill={BLUE} /><path d="M15 3H9M11 1L9 3l2 2" stroke={TEAL} strokeWidth="1.500" fill="none" /></Tool>
                        <Tool ml={7} w={14}><circle cx="7.500" cy="8" r="6" fill="none" stroke="#bbb" strokeWidth="2" /><path d="M7.500 4v4h3" stroke="#999" fill="none" /></Tool>
                        <Tool ml={8} w={14}><rect x=".5" y="1.500" width="13" height="13" fill="#fff" stroke="#666" /><rect x="1" y="2" width="12" height="2" fill="#888" /><path d="M3 7h3M8 7h3M3 11h3M8 11h3" stroke="#888" /></Tool>
                        <ToolSep $ml={7} />
                        <Tool ml={6} w={16}><rect x="0" y="7" width="7" height="7" fill={BLUE} /><rect x="8" y="7" width="6" height="7" fill={TEAL} /><rect x="3" y="3" width="6" height="3" fill={RED} /><rect x="11" y="3" width="5" height="5" fill={SAND} /></Tool>
                        <ToolSep $ml={6} />
                        <Tool ml={7} w={15}><circle cx="7.500" cy="8" r="7" fill="#bbb" /><path d="M7.500 12V5M5 7l2.500-2.500L10 7" stroke="#fff" strokeWidth="1.500" fill="none" /></Tool>
                        <Tool ml={7} w={15}><circle cx="7.500" cy="8" r="7" fill="#bbb" /><path d="M7.500 4v7M5 9l2.500 2.500L10 9" stroke="#fff" strokeWidth="1.500" fill="none" /></Tool>
                        <ToolSep $ml={6} />
                        <Tool ml={8} w={12}><path d="M0 1h12L7.500 7v7l-3-2V7z" fill={SAND} /></Tool>
                        <ToolDrop $ml={6} />
                        <ToolSep $ml={7} />
                        <Tool ml={8} w={14}><path d="M1 5.500h6v-4h5v6H7M1 5.500v9h9v-7" fill="none" stroke="#555" strokeWidth="1.500" /></Tool>
                        <ToolDrop $ml={7} />
                        <ToolSep $ml={6} />
                        <Tool ml={8} w={13}><path d="M.5 .5h7l3 3v11h-10z" fill="#fff" stroke="#666" /><circle cx="7" cy="9" r="2.500" fill="none" stroke={BLUE} /><path d="M9 11l3 3" stroke={BLUE} strokeWidth="1.500" /></Tool>
                      </Toolbar>
                      <SubHead>
                        {subColumns.map(([label, w, sort], i) => (
                          <SubCell key={i} $w={w}>
                            <span>{label}</span>
                            {sort && <SortMark />}
                          </SubCell>
                        ))}
                      </SubHead>
                    </SubPanel>
                    <ScrollBar>
                      <ScrollArrow><Chevron up /></ScrollArrow>
                      <ScrollThumb />
                      <ScrollArrow><Chevron /></ScrollArrow>
                    </ScrollBar>
                  </BottomSection>
                </TabsBody>
              </TabsPanel>
            </Content>
          </Main>
        </Body>

        <StatusBar><Grip $c="#a8cde8" /></StatusBar>

        <Dialog>
          <DialogTitle>
            <Ico>
              <circle cx="8" cy="8" r="4" fill={SAND} />
              <circle cx="8" cy="8" r="5.800" fill="none" stroke={SAND} strokeWidth="2.600" strokeDasharray="2.500 2" />
            </Ico>
            Split Event By Selected Locations
            <DialogButtons>
              <Ico w={9} h={9}><rect x="0" y="6" width="8" height="2" fill="#222" /></Ico>
              <Ico w={10} h={9}><rect x=".5" y=".5" width="8" height="7" fill="none" stroke="#222" /><rect x="0" y="0" width="9" height="2" fill="#222" /></Ico>
              <CloseBox><Ico w={10} h={9}><path d="M1 1l8 7M9 1L1 8" stroke="#fff" strokeWidth="2" /></Ico></CloseBox>
            </DialogButtons>
          </DialogTitle>
          <DialogBody>
            <InfoGroup>
              <Legend $x={1} $y={-9}>Split Event By Selected Locations</Legend>
              Select at least one location to split this event. The selected location(s) will be moved to a new event.
            </InfoGroup>
            <LocationsGroup>
              <Legend $x={6} $y={-9}>
                <Ico w={11} h={15}><path d="M5.500 15C3 11 .5 8.500.5 5.500a5 5 0 0 1 10 0C10.500 8.500 8 11 5.500 15z" fill={RED} /><circle cx="5.500" cy="5.500" r="1.800" fill="#fff" /></Ico>
                <span>Event Locations</span>
              </Legend>
              <GridHead>
                <HeadCell />
                <HeadCheck><CheckBox><Ico w={7} h={7}><rect width="7" height="7" fill="#333" /></Ico></CheckBox></HeadCheck>
                <HeadCell>Status</HeadCell>
                <HeadCell>Conflict</HeadCell>
                <HeadCell>Location Name</HeadCell>
                <HeadCell>Booked From</HeadCell>
                <HeadCell>Booked To</HeadCell>
                <HeadCell>Description</HeadCell>
              </GridHead>
              {locations.map((loc, i) => {
                const bg = loc.on ? '#cce4f7' : loc.plain ? '#f8f8f8' : '#f0f0f0';
                return (
                  <Row key={i} $focus={loc.focus}>
                    <Indicator>{loc.focus && <Ico w={4} h={7}><path d="M0 0v7l4-3.500z" fill="#777" /></Ico>}</Indicator>
                    <CheckCell $bg={loc.focus ? '#fff' : bg}>
                      <CheckBox>
                        {loc.on && <Ico w={11} h={11}><path d="M2 5.500l2.500 2.500L9.500 2.500" fill="none" stroke="#444" strokeWidth="1.800" /></Ico>}
                      </CheckBox>
                    </CheckCell>
                    <Cell $bg="#adff2f" $fg="#1a2a00">Tentative</Cell>
                    <Cell $bg="#32cd32" $fg="#f2fff0">None</Cell>
                    <Cell $bg={bg}>{loc.name}</Cell>
                    <Cell $bg={bg}>{loc.from}</Cell>
                    <Cell $bg={bg}>{loc.to}</Cell>
                    <Cell $bg={bg}>Science Conference</Cell>
                  </Row>
                );
              })}
              <GridEnd />
            </LocationsGroup>
            <DialogFooter>
              <DialogButton $primary>OK</DialogButton>
              <DialogButton>Cancel</DialogButton>
            </DialogFooter>
            <Grip $c="#c4c4c4" />
          </DialogBody>
        </Dialog>
      </Window>
    </>
  );
}
